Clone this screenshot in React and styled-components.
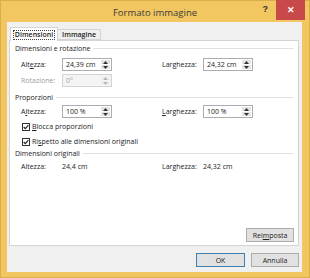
import styled, { createGlobalStyle } from "styled-components";

const GlobalStyle = createGlobalStyle`
  html, body {
    margin: 0;
    padding: 0;
  }
  body {
    width: 310px;
    height: 278px;
    overflow: hidden;
    font-family: "Open Sans", "Liberation Sans", sans-serif;
    color: #222;
  }
`;

const Window = styled.div`
  width: 310px;
  height: 278px;
  box-sizing: border-box;
  background: #f2c761;
  border: 1px solid #dcae48;
  display: flex;
  flex-direction: column;
`;

const TitleBar = styled.div`
  height: 21px;
  display: grid;
  grid-template-columns: 1fr auto 1fr;
  align-items: center;
`;

const Title = styled.div`
  grid-column: 2;
  font-size: 9.5px;
  color: #3a3a3a;
  padding-top: 1px;
`;

const Controls = styled.div`
  grid-column: 3;
  justify-self: end;
  align-self: start;
  display: flex;
  align-items: flex-start;
  gap: 8px;
  margin-top: -1px;
  margin-right: 4px;
`;

const Help = styled.span`
  font-family: "Liberation Sans", sans-serif;
  font-weight: bold;
  font-size: 9px;
  color: #333;
  margin-top: 4px;
`;

const Close = styled.div`
  width: 29px;
  height: 20px;
  background: #c9494b;
  color: #fff;
  font-family: "Liberation Sans", sans-serif;
  font-size: 9px;
  font-weight: bold;
  display: flex;
  align-items: center;
  justify-content: center;
`;

const Body = styled.div`
  flex: 1;
  margin: 0 7px 5px 6px;
  background: #f0f0f0;
  padding: 5px 3px 5px 2px;
  display: flex;
  flex-direction: column;
`;

const TabStrip = styled.div`
  display: flex;
  align-items: flex-end;
  height: 14px;
  margin-bottom: -1px;
  padding-left: 1px;
`;

const Tab = styled.div`
  box-sizing: border-box;
  height: ${(p) => (p.$active ? "14px" : "11px")};
  margin-bottom: ${(p) => (p.$active ? "0" : "1px")};
  width: ${(p) => (p.$active ? "48px" : "43px")};
  background: ${(p) => (p.$active ? "#fff" : "#f0f0f0")};
  border: 1px solid #d4d4d4;
  border-bottom: ${(p) => (p.$active ? "none" : "1px solid #d4d4d4")};
  border-left: ${(p) => (p.$active ? "1px solid #d4d4d4" : "none")};
  position: relative;
  z-index: ${(p) => (p.$active ? 1 : 0)};
  font-size: 7px;
  font-weight: 600;
  display: flex;
  align-items: center;
  justify-content: center;
`;

const Focus = styled.span`
  border: 1px dotted #444;
  padding: 0 1px;
  line-height: 8px;
`;

const Panel = styled.div`
  flex: 1;
  background: #fff;
  border: 1px solid #d4d4d4;
  padding: 1px 3px 3px 5px;
  display: flex;
  flex-direction: column;
  font-size: 7px;
`;

const SectionHeader = styled.div`
  display: flex;
  align-items: center;
  gap: 3px;
  height: 12px;
  margin-top: ${(p) => p.$mt || 0}px;
  &::after {
    content: "";
    flex: 1;
    height: 1px;
    background: #e2e2e2;
    margin-right: 1px;
  }
`;

const FieldRow = styled.div`
  display: flex;
  align-items: center;
  height: ${(p) => p.$h || 13}px;
  padding-left: 6px;
  margin-top: ${(p) => p.$mt || 0}px;
`;

const Field = styled.div`
  width: 141px;
  flex-shrink: 0;
  display: flex;
  align-items: center;
`;

const Label = styled.span`
  width: 41px;
  flex-shrink: 0;
  color: ${(p) => (p.$disabled ? "#9d9d9d" : "#222")};
`;

const Key = styled.span`
  text-decoration: underline;
`;

const InputGroup = styled.div`
  box-sizing: border-box;
  width: 50px;
  height: 13px;
  border: 1px solid ${(p) => (p.$disabled ? "#d3d3d3" : "#abadb3")};
  background: ${(p) => (p.$disabled ? "#f4f4f4" : "#fff")};
  display: flex;
`;

const InputText = styled.span`
  flex: 1;
  padding-left: 3px;
  line-height: 11px;
  color: ${(p) => (p.$disabled ? "#a5a5a5" : "#222")};
`;

const Spinner = styled.div`
  width: 9px;
  display: flex;
  flex-direction: column;
  gap: 1px;
  padding: 1px;
`;

const SpinButton = styled.div`
  flex: 1;
  background: ${(p) => (p.$disabled ? "#f0f0f0" : "#e4e4e4")};
  display: flex;
  align-items: center;
  justify-content: center;
`;

const Value = styled.span`
  color: #222;
`;

const CheckRow = styled.label`
  display: flex;
  align-items: center;
  gap: 2px;
  height: 11px;
  padding-left: 7px;
  margin-top: ${(p) => p.$mt || 0}px;
`;

const Box = styled.span`
  box-sizing: border-box;
  width: 8px;
  height: 8px;
  border: 1px solid #333;
  background: #fff;
  display: flex;
  align-items: center;
  justify-content: center;
`;

const Spacer = styled.div`
  flex: 1;
`;

const ButtonRow = styled.div`
  display: flex;
  justify-content: flex-end;
  gap: 6px;
  margin-top: ${(p) => p.$mt || 0}px;
  margin-right: ${(p) => p.$mr || 0}px;
`;

const Button = styled.div`
  box-sizing: border-box;
  width: ${(p) => p.$w || 48}px;
  height: 14px;
  background: #e1e1e1;
  border: 1px solid ${(p) => (p.$primary ? "#3c7fb1" : "#adadad")};
  font-size: 7px;
  display: flex;
  align-items: center;
  justify-content: center;
  color: #222;
`;

const Arrow = ({ up, disabled }) => (
  <svg width="5" height="3" viewBox="0 0 5 3">
    <path
      d={up ? "M0 3 L2.5 0 L5 3 Z" : "M0 0 L2.5 3 L5 0 Z"}
      fill={disabled ? "#b5b5b5" : "#333"}
    />
  </svg>
);

const SpinInput = ({ value, disabled }) => (
  <InputGroup $disabled={disabled}>
    <InputText $disabled={disabled}>{value}</InputText>
    <Spinner>
      <SpinButton $disabled={disabled}>
        <Arrow up disabled={disabled} />
      </SpinButton>
      <SpinButton $disabled={disabled}>
        <Arrow disabled={disabled} />
      </SpinButton>
    </Spinner>
  </InputGroup>
);

const Check = () => (
  <Box>
    <svg width="7" height="6" viewBox="0 0 7 6">
      <path d="M0.8 3 L2.7 5 L6.3 0.8" fill="none" stroke="#222" strokeWidth="1.3" />
    </svg>
  </Box>
);

export default function App() {
  return (
    <>
      <GlobalStyle />
      <Window>
        <TitleBar>
          <Title>Formato immagine</Title>
          <Controls>
            <Help>?</Help>
            <Close>✕</Close>
          </Controls>
        </TitleBar>
        <Body>
          <TabStrip>
            <Tab $active>
              <Focus>Dimensioni</Focus>
            </Tab>
            <Tab>Immagine</Tab>
          </TabStrip>
          <Panel>
            <SectionHeader>Dimensioni e rotazione</SectionHeader>
            <FieldRow $mt={4}>
              <Field>
                <Label>
                  Alt<Key>e</Key>zza:
                </Label>
                <SpinInput value="24,39 cm" />
              </Field>
              <Field>
                <Label>
                  Lar<Key>g</Key>hezza:
                </Label>
                <SpinInput value="24,32 cm" />
              </Field>
            </FieldRow>
            <FieldRow $mt={3}>
              <Field>
                <Label $disabled>Rotazione:</Label>
                <SpinInput value="0°" disabled />
              </Field>
            </FieldRow>
            <SectionHeader $mt={4}>Proporzioni</SectionHeader>
            <FieldRow $mt={2}>
              <Field>
                <Label>
                  A<Key>l</Key>tezza:
                </Label>
                <SpinInput value="100 %" />
              </Field>
              <Field>
                <Label>
                  <Key>L</Key>arghezza:
                </Label>
                <SpinInput value="100 %" />
              </Field>
            </FieldRow>
            <CheckRow $mt={3}>
              <Check />
              <span>
                <Key>B</Key>locca proporzioni
              </span>
            </CheckRow>
            <CheckRow $mt={4}>
              <Check />
              <span>
                Ri<Key>s</Key>petto alle dimensioni originali
              </span>
            </CheckRow>
            <SectionHeader>Dimensioni originali</SectionHeader>
            <FieldRow $h={12} $mt={1}>
              <Field>
                <Label>Altezza:</Label>
                <Value>24,4 cm</Value>
              </Field>
              <Field>
                <Label>Larghezza:</Label>
                <Value>24,32 cm</Value>
              </Field>
            </FieldRow>
            <Spacer />
            <ButtonRow $mr={1}>
              <Button>
                Rei<Key>m</Key>posta
              </Button>
            </ButtonRow>
          </Panel>
          <ButtonRow $mt={7}>
            <Button $primary $w={49}>
              OK
            </Button>
            <Button>Annulla</Button>
          </ButtonRow>
        </Body>
      </Window>
    </>
  );
}
